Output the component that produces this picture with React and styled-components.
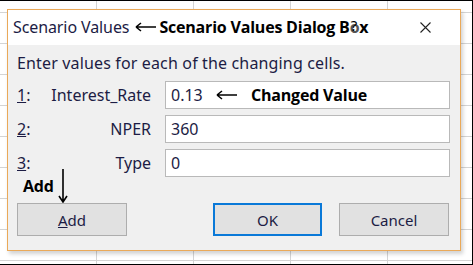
import styled, { createGlobalStyle } from "styled-components";

const Global = createGlobalStyle`
	html, body {
		margin: 0;
		padding: 0;
		background: #fff;
	}
`;

const Sheet = styled.div`
	width: 473px;
	height: 265px;
	box-sizing: border-box;
	border: 1px solid #000;
	border-left: none;
	padding: 8px 0 0 7px;
	background-color: #fff;
	background-image:
		repeating-linear-gradient(to right, transparent 0 96px, #d4d4d4 96px 97px),
		repeating-linear-gradient(to bottom, transparent 0 11px, #d4d4d4 11px 12px, transparent 12px 43px);
	background-size: 100% 100%, 100% 31px;
	overflow: hidden;
	font-family: "Noto Sans", "Open Sans", sans-serif;
`;

const Dialog = styled.div`
	width: 454px;
	height: 242px;
	box-sizing: border-box;
	border: 1px solid #eaa959;
	background: #f0f0f0;
	box-shadow: 2px 3px 4px rgba(0, 0, 0, 0.18);
	display: flex;
	flex-direction: column;
`;

const TitleBar = styled.div`
	height: 35px;
	background: #fff;
	display: flex;
	align-items: center;
	padding: 0 0 2px 5px;
	box-sizing: border-box;
	position: relative;
`;

const Title = styled.span`
	font-size: 16px;
	color: #1c1c44;
	letter-spacing: -0.1px;
`;

const Note = styled.span`
	font-family: "Open Sans", "Noto Sans", sans-serif;
	font-weight: 700;
	font-size: ${(p) => p.$size || 15}px;
	color: #000;
	white-space: nowrap;
	letter-spacing: -0.2px;
`;

const LeftArrow = styled.svg`
	width: 21px;
	height: 10px;
	margin: 0 ${(p) => p.$after || 3}px 0 ${(p) => p.$before || 6}px;
	flex: none;
`;

const HelpO = styled.span`
	position: relative;
	color: #555;
`;

const Help = styled.span`
	position: absolute;
	left: 1px;
	top: -1px;
	font-family: "Noto Sans", sans-serif;
	font-weight: 400;
	font-size: 15px;
	color: #000;
	z-index: 1;
`;

const Close = styled.svg`
	position: absolute;
	right: 29px;
	top: 12px;
	width: 11px;
	height: 11px;
`;

const Body = styled.div`
	flex: 1;
	padding: 8px 10px 0 9px;
	display: flex;
	flex-direction: column;
	font-size: 16px;
	color: #1c1c44;
`;

const Intro = styled.div`
	line-height: 20px;
	margin-bottom: 8px;
	letter-spacing: 0.15px;
`;

const Row = styled.div`
	display: flex;
	align-items: center;
	height: 28px;
	margin-bottom: 6px;
`;

const Num = styled.span`
	width: 20px;
	flex: none;
`;

const Label = styled.span`
	width: 128px;
	text-align: right;
	padding-right: 14px;
	box-sizing: border-box;
	flex: none;
`;

const Field = styled.div`
	flex: 1;
	height: 28px;
	box-sizing: border-box;
	border: 1px solid #b9b9b9;
	background: #fff;
	display: flex;
	align-items: center;
	padding-left: 5px;
`;

const Value = styled.span`
	width: 40px;
	flex: none;
`;

const ButtonRow = styled.div`
	display: flex;
	align-items: flex-end;
`;

const Marker = styled.div`
	width: 110px;
	display: flex;
	flex-direction: column;
	margin-right: 86px;
	position: relative;
`;

const MarkerHead = styled.div`
	height: 26px;
	padding-left: 6px;
	display: flex;
	align-items: flex-start;
	line-height: 18px;
	margin-top: -6px;
`;

const DownArrow = styled.svg`
	position: absolute;
	left: 41px;
	top: -14px;
	width: 10px;
	height: 34px;
	z-index: 1;
`;

const Button = styled.button`
	width: ${(p) => p.$w || 110}px;
	height: 33px;
	box-sizing: border-box;
	background: #e1e1e1;
	border: ${(p) => (p.$primary ? "2px solid #0a79d8" : "1px solid #adadad")};
	font-family: "Noto Sans", "Open Sans", sans-serif;
	font-size: 15px;
	color: #1c1c44;
	padding: 0;
	margin-right: ${(p) => p.$gap || 0}px;
`;

const App = () => {
	const rows = [
		{ n: "1", label: "Interest_Rate", value: "0.13", note: true },
		{ n: "2", label: "NPER", value: "360" },
		{ n: "3", label: "Type", value: "0" },
	];

	return (
		<>
			<Global />
			<Sheet>
				<Dialog>
					<TitleBar>
						<Title>Scenario Values</Title>
						<LeftArrow viewBox="0 0 21 10">
							<path d="M1 5H21M1 5L6 1M1 5L6 9" stroke="#000" strokeWidth="1.6" fill="none" />
						</LeftArrow>
						<Note $size={16}>
							Scenario Values Dialog B
							<HelpO>
								o<Help>?</Help>
							</HelpO>
							x
						</Note>
						<Close viewBox="0 0 11 11">
							<path d="M0.5 0.5L10.5 10.5M10.5 0.5L0.5 10.5" stroke="#222" strokeWidth="1.1" />
						</Close>
					</TitleBar>
					<Body>
						<Intro>Enter values for each of the changing cells.</Intro>
						{rows.map((r) => (
							<Row key={r.n}>
								<Num>
									<u>{r.n}</u>:
								</Num>
								<Label>{r.label}</Label>
								<Field>
									<Value>{r.value}</Value>
									{r.note && (
										<>
											<LeftArrow viewBox="0 0 21 10" $before={5} $after={14}>
												<path d="M1 5H21M1 5L6 1M1 5L6 9" stroke="#000" strokeWidth="1.6" fill="none" />
											</LeftArrow>
											<Note $size={16}>Changed Value</Note>
										</>
									)}
								</Field>
							</Row>
						))}
						<ButtonRow>
							<Marker>
								<DownArrow viewBox="0 0 10 34">
									<path d="M5 0V33M1 27L5 33L9 27" stroke="#000" strokeWidth="1.6" fill="none" />
								</DownArrow>
								<MarkerHead>
									<Note $size={16}>Add</Note>
								</MarkerHead>
								<Button>
									<u>A</u>dd
								</Button>
							</Marker>
							<Button $primary $w={109} $gap={17}>
								OK
							</Button>
							<Button>Cancel</Button>
						</ButtonRow>
					</Body>
				</Dialog>
			</Sheet>
		</>
	);
};

export default App;
